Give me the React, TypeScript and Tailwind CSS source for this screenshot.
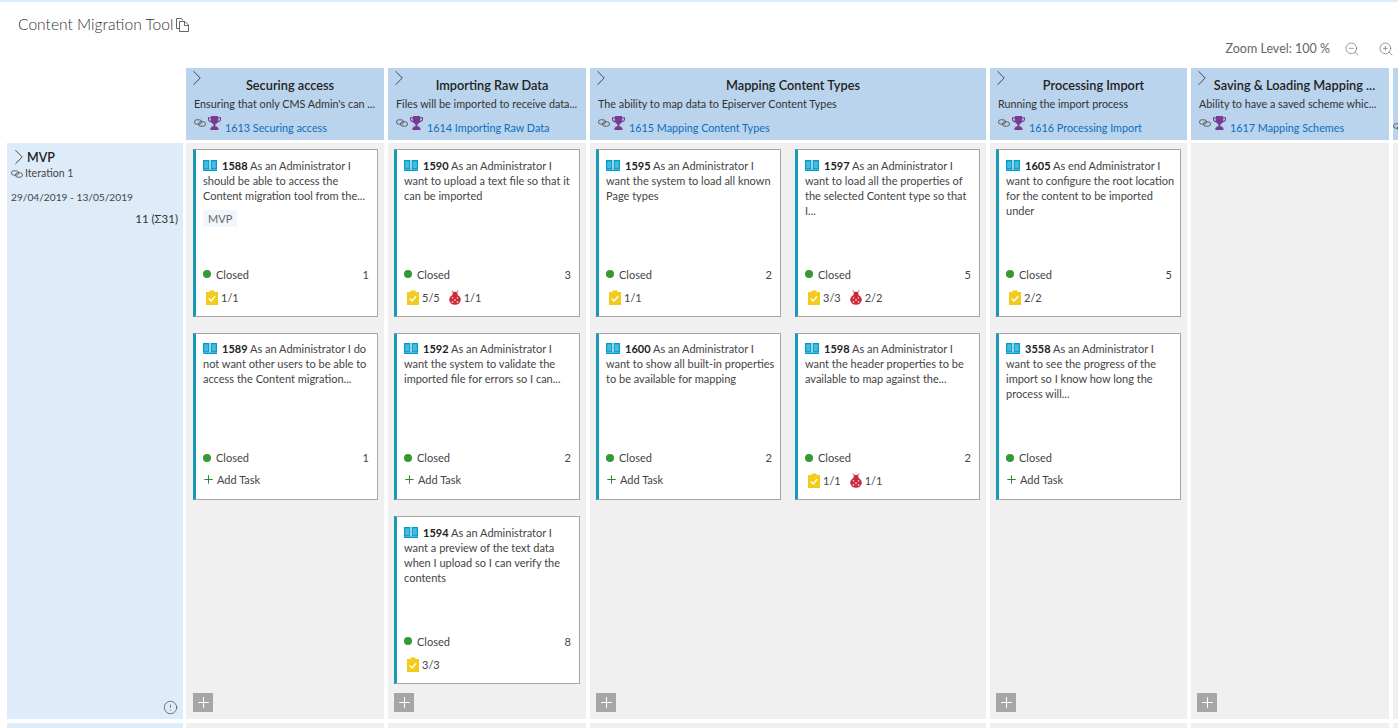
import React from 'react';
import { ChevronRight, CircleAlert, Plus, ZoomIn, ZoomOut } from 'lucide-react';

type Card = {
  id: number;
  text: string;
  points?: number;
  tag?: string;
  tasks?: string;
  bugs?: string;
};

type Feature = {
  title: string;
  desc: string;
  link: string;
  width: string;
  cards: Card[];
  twoCol?: boolean;
  longTitle?: boolean;
};

const features: Feature[] = [
  {
    title: 'Securing access',
    desc: "Ensuring that only CMS Admin's can ...",
    link: '1613 Securing access',
    width: 'w-[198px]',
    cards: [
      { id: 1588, text: 'As an Administrator I should be able to access the Content migration tool from the...', points: 1, tag: 'MVP', tasks: '1/1' },
      { id: 1589, text: 'As an Administrator I do not want other users to be able to access the Content migration...', points: 1 },
    ],
  },
  {
    title: 'Importing Raw Data',
    desc: 'Files will be imported to receive data...',
    link: '1614 Importing Raw Data',
    width: 'w-[198px]',
    cards: [
      { id: 1590, text: 'As an Administrator I want to upload a text file so that it can be imported', points: 3, tasks: '5/5', bugs: '1/1' },
      { id: 1592, text: 'As an Administrator I want the system to validate the imported file for errors so I can...', points: 2 },
      { id: 1594, text: 'As an Administrator I want a preview of the text data when I upload so I can verify the contents', points: 8, tasks: '3/3' },
    ],
  },
  {
    title: 'Mapping Content Types',
    desc: 'The ability to map data to Episerver Content Types',
    link: '1615 Mapping Content Types',
    width: 'w-[396px]',
    twoCol: true,
    cards: [
      { id: 1595, text: 'As an Administrator I want the system to load all known Page types', points: 2, tasks: '1/1' },
      { id: 1597, text: 'As an Administrator I want to load all the properties of the selected Content type so that I...', points: 5, tasks: '3/3', bugs: '2/2' },
      { id: 1600, text: 'As an Administrator I want to show all built-in properties to be available for mapping', points: 2 },
      { id: 1598, text: 'As an Administrator I want the header properties to be available to map against the...', points: 2, tasks: '1/1', bugs: '1/1' },
    ],
  },
  {
    title: 'Processing Import',
    desc: 'Running the import process',
    link: '1616 Processing Import',
    width: 'w-[197px]',
    cards: [
      { id: 1605, text: 'As end Administrator I want to configure the root location for the content to be imported under', points: 5, tasks: '2/2' },
      { id: 3558, text: 'As an Administrator I want to see the progress of the import so I know how long the process will...' },
    ],
  },
  {
    title: 'Saving & Loading Mapping ...',
    desc: 'Ability to have a saved scheme whic...',
    link: '1617 Mapping Schemes',
    width: 'w-[198px]',
    longTitle: true,
    cards: [],
  },
];

const LinkIcon = () => (
  <svg width="12" height="8" viewBox="0 0 12 8" fill="none" stroke="#555" strokeWidth="0.9" className="shrink-0">
    <rect x="0.5" y="0.8" width="7" height="4.4" rx="2.2" />
    <rect x="4.5" y="2.8" width="7" height="4.4" rx="2.2" />
  </svg>
);

const TrophyIcon = () => (
  <svg width="13" height="14" viewBox="0 0 13 14" className="shrink-0">
    <path d="M3 0h7v1.200h3v2.300c0 1.500-1.200 2.500-3.200 2.700C9.200 7.300 8.200 8 7.400 8.300V10.500h2v1.300h1V14h-8v-2.200h1v-1.300h2V8.300C4.800 8 3.800 7.300 3.200 6.200 1.200 6 0 5 0 3.500V1.200h3z" fill="#773b93" />
    <path d="M1.100 2.300v1.200c0 .7.600 1.300 1.700 1.500-.1-.8-.1-1.800-.1-2.700zM11.900 2.300v1.200c0 .7-.6 1.300-1.700 1.500.1-.8.1-1.800.1-2.700z" fill="#b9d4ec" />
  </svg>
);

const BookIcon = () => (
  <svg width="14" height="11" viewBox="0 0 14 11" className="shrink-0">
    <path d="M0 0h6.400v9.500H0zM7.600 0H14v9.500H7.600z" fill="#009ccc" />
    <path d="M0 9.500h14V11H0z" fill="#009ccc" />
    <path d="M1.200 1.200h4v7h-4zM8.800 1.200h4v7h-4z" fill="#4cb9dc" />
  </svg>
);

const TaskIcon = () => (
  <svg width="12" height="15" viewBox="0 0 12 15" className="shrink-0">
    <path d="M0 2h3.500V0.500h5V2H12v13H0z" fill="#f2cb1d" />
    <path d="M2.800 8.500l2.300 2.400 4-4.700" fill="none" stroke="#fff" strokeWidth="1.400" />
  </svg>
);

const BugIcon = () => (
  <svg width="12" height="15" viewBox="0 0 12 15" className="shrink-0">
    <path d="M3 0.500l1.500 2.500M9 0.500L7.500 3" stroke="#cc293d" strokeWidth="0.900" />
    <circle cx="6" cy="4.200" r="2.500" fill="#cc293d" />
    <ellipse cx="6" cy="9.600" rx="5.800" ry="5.200" fill="#cc293d" />
    <circle cx="3.500" cy="7.800" r="0.900" fill="#f6b8c0" />
    <circle cx="8.500" cy="7.800" r="0.900" fill="#f6b8c0" />
    <circle cx="6" cy="10" r="0.900" fill="#f6b8c0" />
    <circle cx="3.500" cy="12" r="0.900" fill="#f6b8c0" />
    <circle cx="8.500" cy="12" r="0.900" fill="#f6b8c0" />
  </svg>
);

const CopyIcon = () => (
  <svg width="13" height="14" viewBox="0 0 13 14" fill="none" stroke="#555" strokeWidth="0.9">
    <path d="M3 10.500H.5V.5h5l1.500 2" />
    <path d="M3.500 3.500h5.500l3.500 3.500v6.500h-9z" />
    <path d="M8.500 3.500v4h4" />
  </svg>
);

const WorkCard = ({ card }: { card: Card }) => (
  <div className="h-[167.5px] shrink-0 bg-white border border-[#a6a6a6] border-l-[3px] border-l-[#1a9ab8] pl-[7px] pr-[5px] pt-[7.5px] flex flex-col text-[11px] leading-[15px] text-[#444]">
    <div className="h-[108.5px]">
      <div>
        <span className="inline-block align-[-1px] mr-[5px]">
          <BookIcon />
        </span>
        <span className="font-bold text-[#222]">{card.id}</span> {card.text}
      </div>
      {card.tag && (
        <div className="mt-[7px] w-fit px-[5px] py-[1px] bg-[#eff6fc] text-[#666]">{card.tag}</div>
      )}
    </div>
    <div className="flex items-center justify-between h-[16px]">
      <div className="flex items-center gap-[5px]">
        <span className="w-[8px] h-[8px] rounded-full bg-[#339933]" />
        Closed
      </div>
      <span className="mr-[3px]">{card.points}</span>
    </div>
    {card.tasks ? (
      <div className="flex items-center mt-[7px] h-[16px] pl-[3px]">
        <TaskIcon />
        <span className="ml-[3px]">{card.tasks}</span>
        {card.bugs && (
          <>
            <span className="ml-[9px]">
              <BugIcon />
            </span>
            <span className="ml-[3px]">{card.bugs}</span>
          </>
        )}
      </div>
    ) : (
      <div className="flex items-center gap-[2px] mt-[6px] h-[16px]">
        <Plus size={13} strokeWidth={1.8} className="text-[#1e8c1e] -ml-[1px]" />
        Add Task
      </div>
    )}
  </div>
);

const AddButton = () => (
  <div className="w-[20px] h-[19px] bg-[#a6a6a6] flex items-center justify-center">
    <Plus size={17} strokeWidth={1.5} className="text-white" />
  </div>
);

export default function App() {
  return (
    <div className="w-[1398px] h-[728px] overflow-hidden bg-white border-t-2 border-[#deecf9] font-['Lato',sans-serif] text-[#333]">
      {/* Title and zoom controls */}
      <div className="h-[32px] pl-[18px] flex items-end">
        <span className="text-[15.6px] leading-[20px] font-light text-[#333]">Content Migration Tool</span>
        <span className="ml-[3px] mb-[2px]">
          <CopyIcon />
        </span>
      </div>
      <div className="h-[34px] flex items-start justify-end pt-[5px] pr-[4px] text-[#666]">
        <span className="text-[12.5px] leading-[20px]">Zoom Level: 100 %</span>
        <ZoomOut size={16} strokeWidth={1} className="ml-[14px] mt-[2px]" />
        <ZoomIn size={16} strokeWidth={1} className="ml-[18px] mt-[2px]" />
      </div>

      {/* Feature headers */}
      <div className="flex gap-[4px] pl-[186px]">
        {features.map((f) => (
          <div key={f.title} className={`${f.width} h-[72px] shrink-0 bg-[#b9d4ec] px-[8px] relative`}>
            <ChevronRight size={26} strokeWidth={0.9} className="absolute -top-[3px] -left-[2px] text-[#444]" />
            <div className={`text-[12.75px] leading-[18px] font-semibold text-[#222] text-center mt-[8px] whitespace-nowrap ${f.longTitle ? 'pl-[9px]' : 'pl-[10px]'}`}>{f.title}</div>
            <div className="text-[10.8px] leading-[15px] text-[#333] mt-[2px] whitespace-nowrap">{f.desc}</div>
            <div className="flex items-start mt-[6px]">
              <span className="mt-[2px]">
                <LinkIcon />
              </span>
              <span className="ml-[2px] -mt-[1px]">
                <TrophyIcon />
              </span>
              <span className="ml-[4px] mt-[3px] text-[10.8px] leading-[15px] text-[#106ebe]">{f.link}</span>
            </div>
          </div>
        ))}
        <div className="w-[60px] h-[72px] shrink-0 bg-[#b9d4ec] pt-[55px]">
          <LinkIcon />
        </div>
      </div>

      {/* Iteration row */}
      <div className="flex gap-[3px] pl-[7px] mt-[3px] h-[576px]">
        <div className="w-[176px] shrink-0 bg-[#deecf9] relative pt-[6px] pl-[4px] pr-[5px] text-[10.6px] leading-[15px]">
          <div className="flex items-center h-[16px] text-[12.5px] font-semibold text-[#222]">
            <ChevronRight size={26} strokeWidth={0.9} className="text-[#444] -ml-[5px] -mr-[5px]" />
            MVP
          </div>
          <div className="flex items-center gap-[2px] text-[#444] mt-[1px]">
            <LinkIcon />
            Iteration 1
          </div>
          <div className="mt-[9px] text-[10.2px] text-[#444]">29/04/2019 - 13/05/2019</div>
          <div className="mt-[6px] text-right text-[11.5px] text-[#333]">11 (Σ31)</div>
          <CircleAlert size={15} strokeWidth={1} className="absolute right-[5px] bottom-[4px] text-[#333]" />
        </div>
        <div className="flex gap-[4px]">
          {features.map((f) => (
            <div key={f.title} className={`${f.width} shrink-0 bg-[#f0f0f0] pl-[6px] first:pl-[7px] pr-[6px] pt-[6px] pb-[7px] flex flex-col`}>
              <div className={f.twoCol ? 'flex-1 grid grid-cols-2 gap-x-[14px] gap-y-[16px] content-start' : 'flex-1 flex flex-col gap-[16px]'}>
                {f.cards.map((c) => (
                  <WorkCard key={c.id} card={c} />
                ))}
              </div>
              <AddButton />
            </div>
          ))}
          <div className="w-[60px] shrink-0 bg-[#f0f0f0]" />
        </div>
      </div>

      {/* Next iteration row, cut off by the window */}
      <div className="flex gap-[3px] pl-[7px] mt-[4px] h-[20px]">
        <div className="w-[176px] shrink-0 bg-[#deecf9]" />
        <div className="flex gap-[4px]">
          {features.map((f) => (
            <div key={f.title} className={`${f.width} shrink-0 bg-[#f0f0f0]`} />
          ))}
          <div className="w-[60px] shrink-0 bg-[#f0f0f0]" />
        </div>
      </div>
    </div>
  );
}
